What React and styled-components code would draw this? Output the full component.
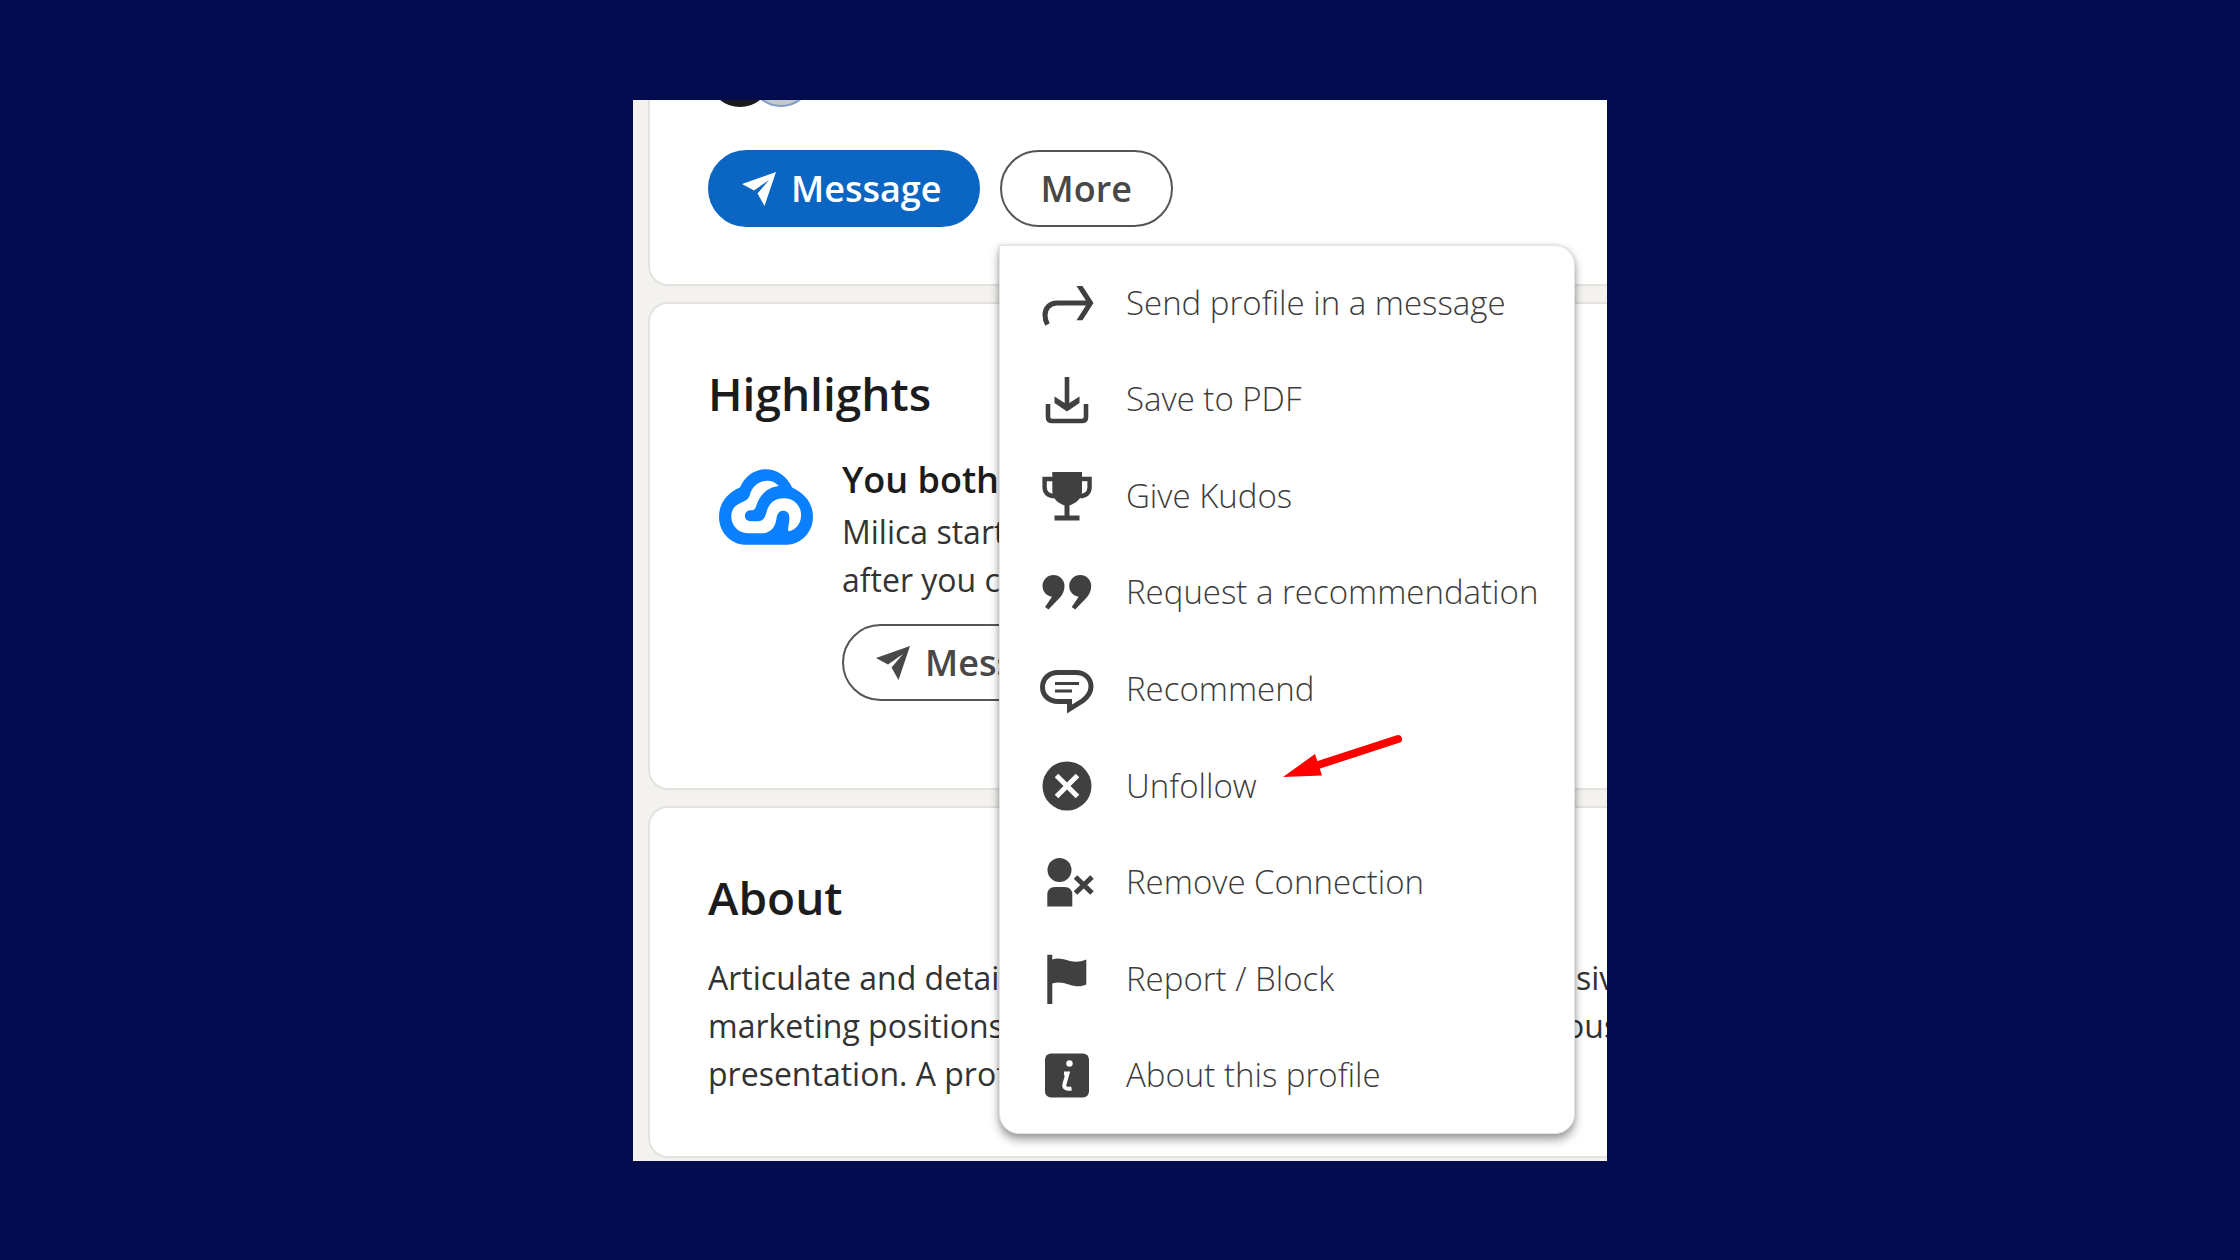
import React from "react";
import styled, { createGlobalStyle, css } from "styled-components";

const ink = "#404040";

const GlobalStyle = createGlobalStyle`
  *, *::before, *::after { box-sizing: border-box; }
  body {
    margin: 0;
    background: #020c4f;
    font-family: "Open Sans", "Noto Sans", sans-serif;
    color: #1c1c1c;
  }
  h2, h3, p, ul { margin: 0; padding: 0; }
  button { font: inherit; cursor: pointer; }
`;

const Page = styled.main`
  min-height: 100vh;
  display: flex;
  align-items: center;
  justify-content: center;
`;

const Profile = styled.div`
  position: relative;
  width: 100%;
  max-width: 974px;
  padding: 0 0 3px 15px;
  display: flex;
  flex-direction: column;
  gap: 16px;
  overflow: hidden;
  background: #f3f2ef;
`;

const Card = styled.section`
  padding: 57px 0 58px 58px;
  background: #fff;
  border: 2px solid #e3e2df;
  border-right: 0;
  border-radius: 20px 0 0 20px;
`;

const TopCard = styled(Card)`
  padding-top: 0;
  padding-bottom: 57px;
  border-top: 0;
  border-top-left-radius: 0;
`;

const HighlightsCard = styled(Card)`
  padding-bottom: 87px;
`;

const Avatars = styled.div`
  display: flex;
  margin: -57px 0 43px 0;
`;

const Avatar = styled.span`
  width: 64px;
  height: 64px;
  flex: none;
  border-radius: 50%;
  background: ${(p) => p.$fill};
  border: 2px solid ${(p) => p.$edge};
  & + & { margin-left: -23px; }
`;

const Actions = styled.div`
  display: flex;
  gap: 20px;
`;

const Pill = styled.button`
  height: 77px;
  padding: 2px 39px 0;
  display: inline-flex;
  align-items: center;
  gap: 15px;
  border-radius: 39px;
  border: 2px solid #555;
  background: #fff;
  color: #484848;
  font-size: 36px;
  font-weight: 600;
  line-height: 48px;
  white-space: nowrap;
  ${(p) => p.$icon && css`padding: 2px 36px 0 32px;`}
  ${(p) => p.$primary && css`
    background: #0a66c2;
    border-color: #0a66c2;
    color: #fff;
  `}
`;

const Title = styled.h2`
  font-size: 46px;
  font-weight: 600;
  line-height: 64px;
`;

const Highlight = styled.div`
  display: flex;
  gap: 29px;
  margin-top: 31px;
  > svg { flex: none; margin: 13px 0 0 11px; }
`;

const HighlightBody = styled.div`
  white-space: nowrap;
  ${Pill} { margin-top: 20px; }
`;

const Subtitle = styled.h3`
  margin-bottom: 4px;
  font-size: 36px;
  font-weight: 600;
  line-height: 48px;
`;

const Text = styled.p`
  font-size: 32px;
  line-height: 48px;
  color: #333;
  white-space: nowrap;
`;

const Summary = styled.div`
  margin-top: 25px;
`;

const Line = styled(Text)`
  display: flex;
  justify-content: space-between;
`;

const LineEnd = styled.span`
  width: ${(p) => p.$width}px;
  flex: none;
`;

const Menu = styled.ul`
  position: absolute;
  top: 145px;
  right: 32px;
  bottom: 27px;
  left: 366px;
  padding: 9px 0;
  display: flex;
  flex-direction: column;
  list-style: none;
  background: #fff;
  border: 1px solid #e4e4e4;
  border-radius: 0 20px 20px 20px;
  box-shadow: 0 6px 10px rgba(0, 0, 0, 0.36), 0 0 5px rgba(0, 0, 0, 0.14);
`;

const MenuRow = styled.li`
  position: relative;
  flex: 1;
  display: flex;
`;

const MenuItem = styled.button`
  flex: 1;
  padding: 0 0 0 40px;
  display: flex;
  align-items: center;
  gap: 32px;
  border: 0;
  background: none;
  color: #3c3c3c;
  font-size: 33px;
  font-weight: 300;
  line-height: 48px;
  text-align: left;
  white-space: nowrap;
`;

const Pointer = styled.svg`
  position: absolute;
  left: 283px;
  top: -3px;
  pointer-events: none;
`;

const SendIcon = () => (
  <svg width="34" height="34" viewBox="0 0 34 34" fill="currentColor" aria-hidden="true">
    <path d="M34 0 0 12l12 6.500L27 8 15.500 21.500 22.500 34Z" />
  </svg>
);

const CloudLogo = () => (
  <svg width="94" height="76" viewBox="87 57 283 228" aria-hidden="true">
    <path fill="#0a80ff" d="M165 285C118 281 87 244 87 200c0-40 24-72 63-88 15-34 44-55 78-55s64 21 79 55c39 18 63 48 63 88 0 46-34 81-78 85Z" />
    <path fill="#fff" d="M267 108C257 97 247 92 233 92c-26 0-46 17-53 42-4 14-13 18-27 24-19 8-29 22-29 41 0 28 20 50 50 51h44c24-2 38-17 42-44 2-16 9-24 21-24s18 9 18 22c0 14-4 25-4 34 0 6 4 7 10 4 18-8 29-25 29-47 0-29-22-50-52-50-27 0-44 14-51 39-6 20-10 30-28 30h-20c-12-1-18-7-18-16 0-11 8-17 19-17 9 0 11-4 14-11 12-36 34-58 69-62Z" />
  </svg>
);

const icons = {
  share: (
    <>
      <path d="M7.500 48.500C5.500 45 5 42 5 39c0-7 5-12 12-12h32" fill="none" stroke="currentColor" strokeWidth="5" />
      <path d="M36.500 10h6L53.500 27l-11 17.300h-6L47.500 27Z" />
    </>
  ),
  download: (
    <>
      <path d="M27 5v29M8 32v13q0 4 4 4h30q4 0 4-4V32" fill="none" stroke="currentColor" strokeWidth="4.600" />
      <path d="M14.500 24.500 27 32.500l12.500-8V31L27 39.500 14.500 31Z" />
    </>
  ),
  trophy: (
    <>
      <path d="M12.300 3H42v19c0 8-6 12-12.500 14.500V46.500h10V51.500h-25V46.500h10V36.500C18 34 12.300 30 12.300 22Z" />
      <path d="M13 10H4.600v8c0 6 4 9 9.500 9M41 10h8.600v8c0 6-4 9-9.500 9" fill="none" stroke="currentColor" strokeWidth="4.400" />
    </>
  ),
  quote: (
    <>
      <path d="M24.500 21c0 5-2 8.500-4.500 11.500L8.500 44.500 5 42l7-10.200C6.500 31 2.500 26.500 2.500 21a11 11 0 0 1 22 0Z" />
      <path d="M51.200 21c0 5-2 8.500-4.500 11.500L35.200 44.500l-3.500-2.500 7-10.200c-5.500-.8-9.500-5.300-9.500-10.800a11 11 0 0 1 22 0Z" />
    </>
  ),
  comment: (
    <>
      <path d="M18 10.500h18c9 0 15 6 15 14 0 6-3 10-8 14L29.500 47v-7.500H18c-9 0-15.500-6-15.500-14.500S9 10.500 18 10.500Z" fill="none" stroke="currentColor" strokeWidth="5" />
      <path d="M15 21.500h24M15 29h17" stroke="currentColor" strokeWidth="3" />
    </>
  ),
  block: (
    <>
      <circle cx="27" cy="27" r="24.500" />
      <path d="m16.500 16.500 21 21m0-21-21 21" stroke="#fff" strokeWidth="5" />
    </>
  ),
  remove: (
    <>
      <circle cx="19.500" cy="15" r="12" />
      <path d="M7.300 51.500V40q0-8 8-8h9q8 0 8 8v11.500Z" />
      <path d="m35.500 22 16.500 16m0-16-16.500 16" stroke="currentColor" strokeWidth="5" />
    </>
  ),
  flag: (
    <path d="M7.300 2.800h5V7.500C24 3.500 31 14 46.300 7.500v25C34 38.500 25 27 12.300 31.500V52h-5Z" />
  ),
  info: (
    <>
      <rect x="5" y="5.500" width="44" height="44" rx="6" />
      <circle cx="29.500" cy="15.500" r="3.200" fill="#fff" />
      <path d="M24 25.500h3.500L24.500 36c-1 4 2 5.500 7 4.500" fill="none" stroke="#fff" strokeWidth="4" />
    </>
  ),
};

const MenuIcon = ({ name }) => (
  <svg width="54" height="54" viewBox="0 0 54 54" fill="currentColor" color={ink} aria-hidden="true">
    {icons[name]}
  </svg>
);

const menuItems = [
  { icon: "share", label: "Send profile in a message" },
  { icon: "download", label: "Save to PDF" },
  { icon: "trophy", label: "Give Kudos" },
  { icon: "quote", label: "Request a recommendation" },
  { icon: "comment", label: "Recommend" },
  { icon: "block", label: "Unfollow", marked: true },
  { icon: "remove", label: "Remove Connection" },
  { icon: "flag", label: "Report / Block" },
  { icon: "info", label: "About this profile" },
];

export default function App() {
  return (
    <Page>
      <GlobalStyle />
      <Profile>
        <TopCard>
          <Avatars>
            <Avatar $fill="#1c1a1c" $edge="#1c1a1c" />
            <Avatar $fill="#c3c8ca" $edge="#7f9cc8" />
          </Avatars>
          <Actions>
            <Pill type="button" $primary $icon><SendIcon />Message</Pill>
            <Pill type="button" aria-haspopup="menu" aria-expanded="true">More</Pill>
          </Actions>
        </TopCard>

        <HighlightsCard>
          <Title>Highlights</Title>
          <Highlight>
            <CloudLogo />
            <HighlightBody>
              <Subtitle>You both</Subtitle>
              <Text>Milica start</Text>
              <Text>after you c</Text>
              <Pill type="button" $icon><SendIcon />Message</Pill>
            </HighlightBody>
          </Highlight>
        </HighlightsCard>

        <Card>
          <Title>About</Title>
          <Summary>
            <Line>Articulate and detai<LineEnd $width={31}>siv</LineEnd></Line>
            <Line>marketing positions<LineEnd $width={42}>ous</LineEnd></Line>
            <Line>presentation. A prof</Line>
          </Summary>
        </Card>

        <Menu role="menu" aria-label="More actions">
          {menuItems.map(({ icon, label, marked }) => (
            <MenuRow key={icon} role="none">
              <MenuItem type="button" role="menuitem">
                <MenuIcon name={icon} />
                {label}
              </MenuItem>
              {marked && (
                <Pointer width="120" height="44" viewBox="0 0 120 44" aria-hidden="true">
                  <path d="M32 32 115 5" stroke="#f00" strokeWidth="8" strokeLinecap="round" />
                  <path d="M0 43 32 20l7 21.500Z" fill="#f00" />
                </Pointer>
              )}
            </MenuRow>
          ))}
        </Menu>
      </Profile>
    </Page>
  );
}
